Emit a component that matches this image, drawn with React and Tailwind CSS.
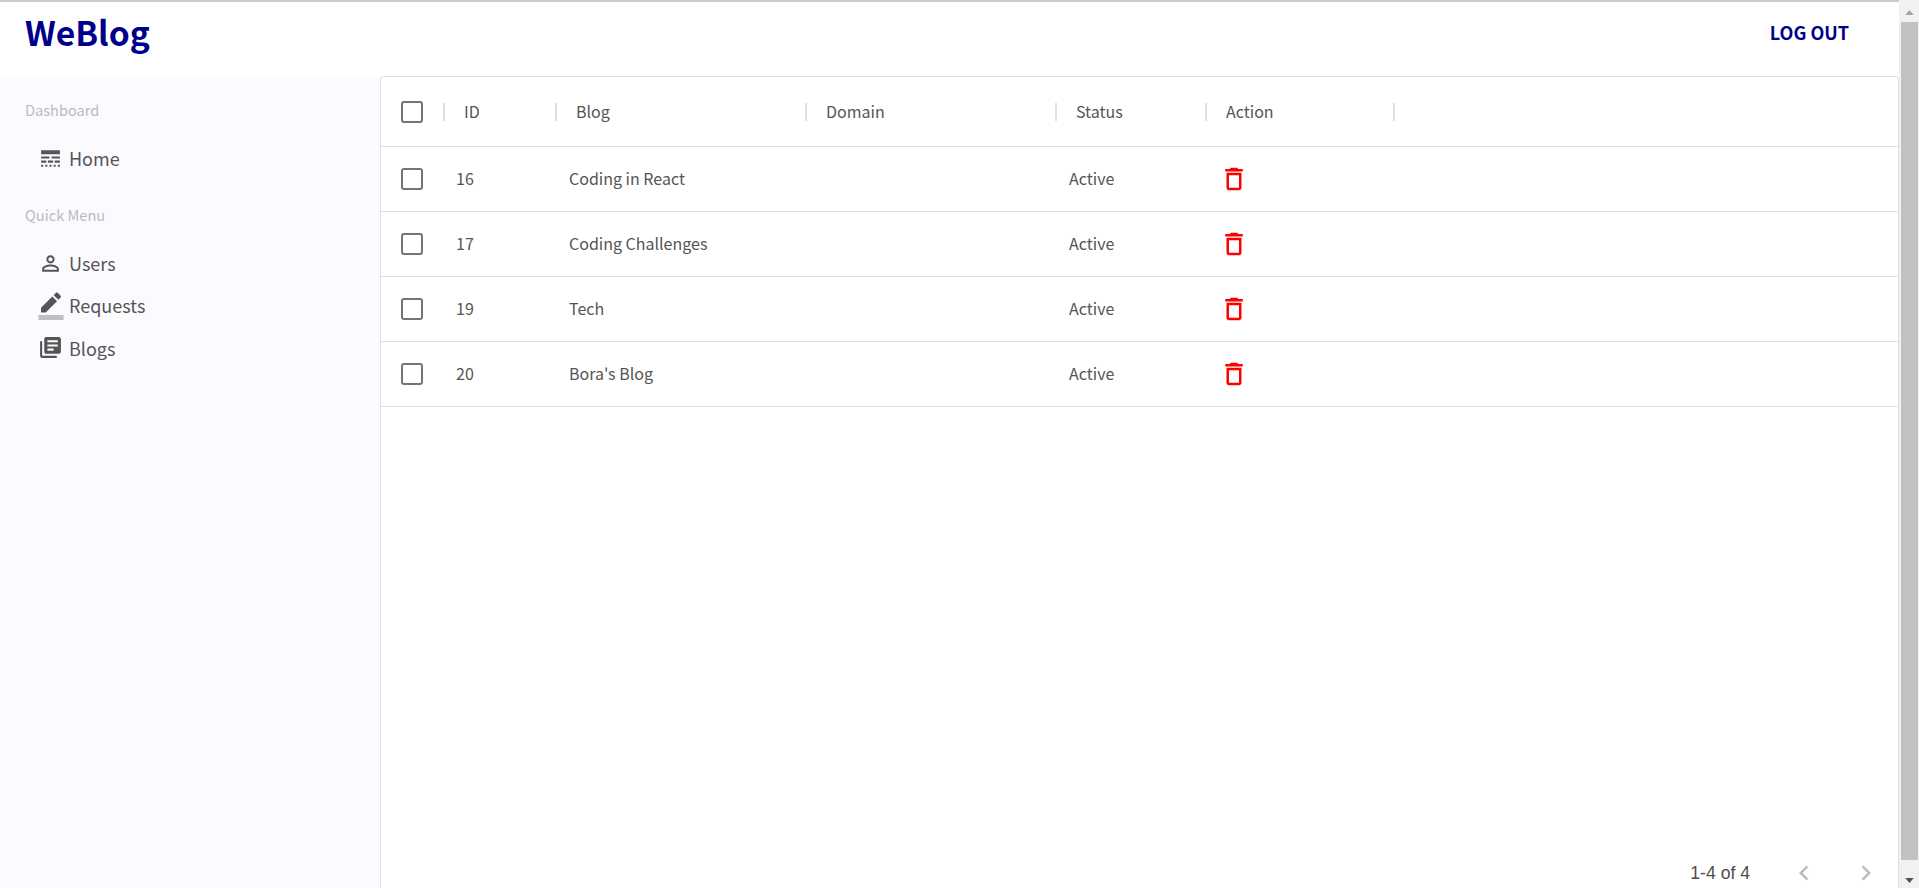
const FONT = '"Noto Sans CJK SC", "Noto Sans", sans-serif'

const rows = [
  { id: 16, blog: 'Coding in React', status: 'Active' },
  { id: 17, blog: 'Coding Challenges', status: 'Active' },
  { id: 19, blog: 'Tech', status: 'Active' },
  { id: 20, blog: "Bora's Blog", status: 'Active' },
]

function Icon({ d, className }) {
  return (
    <svg viewBox="0 0 24 24" fill="currentColor" className={className}>
      <path d={d} />
    </svg>
  )
}

const LINE_STYLE = 'M3 16h5v-2H3v2zm6.5 0h5v-2h-5v2zm6.5 0h5v-2h-5v2zM3 20h2v-2H3v2zm4 0h2v-2H7v2zm4 0h2v-2h-2v2zm4 0h2v-2h-2v2zm4 0h2v-2h-2v2zM3 12h8v-2H3v2zm10 0h8v-2h-8v2zM3 4v4h18V4H3z'
const PERSON = 'M12 5.9c1.16 0 2.1.94 2.1 2.1s-.94 2.1-2.1 2.1S9.9 9.16 9.9 8s.94-2.1 2.1-2.1m0 9c2.97 0 6.1 1.46 6.1 2.1v1.1H5.9V17c0-.64 3.13-2.1 6.1-2.1M12 4C9.79 4 8 5.79 8 8s1.79 4 4 4 4-1.79 4-4-1.79-4-4-4zm0 9c-2.67 0-8 1.34-8 4v3h16v-3c0-2.66-5.33-4-8-4z'
const BOOKS = 'M4 6H2v14c0 1.1.9 2 2 2h14v-2H4V6zm16-4H8c-1.1 0-2 .9-2 2v12c0 1.1.9 2 2 2h12c1.1 0 2-.9 2-2V4c0-1.1-.9-2-2-2zm-1 9H9V9h10v2zm-4 4H9v-2h6v2zm4-8H9V5h10v2z'
const TRASH = 'M6 19c0 1.1.9 2 2 2h8c1.1 0 2-.9 2-2V7H6v12zM8 9h8v10H8V9zm7.5-5l-1-1h-5l-1 1H5v2h14V4z'

function BorderColor({ className }) {
  return (
    <svg viewBox="0 0 24 24" fill="currentColor" className={className}>
      <path fillOpacity=".36" d="M22 24H2v-4h20v4z" />
      <path d="M13.06 5.19l3.75 3.75L7.75 18H4v-3.75l9.06-9.06zm4.82 2.68-3.75-3.75 1.83-1.83c.39-.39 1.02-.39 1.41 0l2.34 2.34c.39.39.39 1.02 0 1.41l-1.83 1.83z" />
    </svg>
  )
}

function Checkbox() {
  return <span className="block w-[22px] h-[22px] rounded-[3px] border-[2.5px] border-[#757575]" />
}

function SideItem({ icon, label, height }) {
  return (
    <li className={`flex items-center pl-[35px] text-[18px] text-[#555555] ${height}`}>
      <span className="flex w-[31px] justify-center text-[#555555]">{icon}</span>
      <span className="ml-[3px] leading-none">{label}</span>
    </li>
  )
}

function HeadCell({ width, label }) {
  return (
    <div className={`flex h-full items-center justify-between ${width}`}>
      <span className="pb-[1px] pl-[19px]">{label}</span>
      <span className="block h-[18px] w-[2px] bg-[#e0e0e0]" />
    </div>
  )
}

export default function App() {
  return (
    <div className="flex h-[888px] w-[1919px] overflow-hidden bg-white" style={{ fontFamily: FONT }}>
      <div className="flex min-w-0 flex-1 flex-col border-t-2 border-[#cccccc]">
        <header className="flex h-[74px] shrink-0 items-center justify-between pl-[25px] pr-[50px]">
          <span className="pb-[14px] text-[33.6px] font-bold leading-none text-[#00008b]">WeBlog</span>
          <span className="pb-[14px] text-[18px] font-bold leading-none text-[#00008b]">LOG OUT</span>
        </header>

        <div className="flex min-h-0 flex-1">
          <aside className="w-[380px] shrink-0 bg-[#fbfbff] pt-[23px]">
            <h3 className="pl-[25px] text-[14.6px] leading-[22px] text-[#bbbbbb]">Dashboard</h3>
            <ul className="mt-[16px]">
              <SideItem height="h-[42px]" label="Home" icon={<Icon d={LINE_STYLE} className="h-[25px] w-[25px]" />} />
            </ul>
            <h3 className="mt-[25px] pl-[25px] text-[14.6px] leading-[22px] text-[#bbbbbb]">Quick Menu</h3>
            <ul className="mt-[16px]">
              <SideItem height="h-[42px]" label="Users" icon={<Icon d={PERSON} className="h-[25px] w-[25px]" />} />
              <SideItem height="h-[41px]" label="Requests" icon={<BorderColor className="h-[30px] w-[30px]" />} />
              <SideItem height="h-[45px]" label="Blogs" icon={<Icon d={BOOKS} className="h-[25px] w-[25px]" />} />
            </ul>
          </aside>

          <main className="flex min-w-0 flex-1 flex-col rounded-t-[4px] border border-b-0 border-[#e0e0e0] text-[16px] text-[#555555]">
            <div className="flex h-[70px] shrink-0 items-center border-b border-[#e0e0e0]">
              <div className="flex h-full w-[64px] items-center justify-between pl-[20px]">
                <Checkbox />
                <span className="block h-[18px] w-[2px] bg-[#e0e0e0]" />
              </div>
              <HeadCell width="w-[112px]" label="ID" />
              <HeadCell width="w-[250px]" label="Blog" />
              <HeadCell width="w-[250px]" label="Domain" />
              <HeadCell width="w-[150px]" label="Status" />
              <HeadCell width="w-[188px]" label="Action" />
            </div>

            {rows.map(r => (
              <div key={r.id} className="flex h-[65px] shrink-0 items-center border-b border-[#e0e0e0]">
                <div className="w-[64px] pl-[20px]"><Checkbox /></div>
                <div className="w-[112px] pb-[2px] pl-[11px]">{r.id}</div>
                <div className="w-[250px] pb-[2px] pl-[12px]">{r.blog}</div>
                <div className="w-[250px]" />
                <div className="w-[150px] pb-[2px] pl-[12px]">{r.status}</div>
                <div className="w-[188px] pl-[12px]">
                  <Icon d={TRASH} className="h-[30px] w-[30px] text-[#ff0000]" />
                </div>
              </div>
            ))}

            <footer className="mt-auto flex h-[30px] items-center justify-end text-[#4d4d4d]" style={{ fontFamily: '"Liberation Sans", sans-serif' }}>
              <span className="text-[17.6px]">1-4 of 4</span>
              <svg viewBox="0 0 24 24" fill="#bdbdbd" className="ml-[39px] h-[30px] w-[30px]">
                <path d="M15.41 7.41 14 6l-6 6 6 6 1.41-1.41L10.83 12z" />
              </svg>
              <svg viewBox="0 0 24 24" fill="#bdbdbd" className="ml-[32px] mr-[17px] h-[30px] w-[30px]">
                <path d="M10 6 8.59 7.41 13.17 12l-4.58 4.59L10 18l6-6z" />
              </svg>
            </footer>
          </main>
        </div>
      </div>

      <div className="flex w-[20px] shrink-0 flex-col items-center bg-[#f1f1f1]">
        <svg viewBox="0 0 10 6" className="mt-[10px] h-[5px] w-[9px]" fill="#a3a3a3"><path d="M5 0l5 6H0z" /></svg>
        <div className="mt-[7px] h-[838px] w-[17px] bg-[#c1c1c1]" />
        <svg viewBox="0 0 10 6" className="mt-[18px] h-[5px] w-[9px]" fill="#505050"><path d="M0 0h10L5 6z" /></svg>
      </div>
    </div>
  )
}
